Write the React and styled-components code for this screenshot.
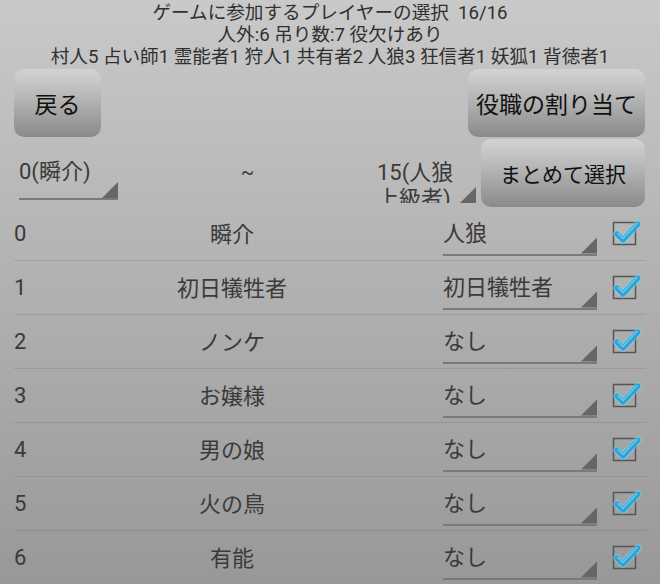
import React from 'react';
import styled, { createGlobalStyle } from 'styled-components';

const Global = createGlobalStyle`
    html, body {
        margin: 0;
        padding: 0;
    }
    body {
        font-family: Roboto, "Noto Sans CJK JP", sans-serif;
    }
`

const Screen = styled.div`
    width: 660px;
    height: 584px;
    overflow: hidden;
    background: linear-gradient(#c9c9c9, #989898);
    color: #383838;
`

const Header = styled.div`
    padding-top: 2px;
    text-align: center;
    font-size: 18.6px;
    line-height: 22px;
    color: #303030;
`

const ButtonRow = styled.div`
    display: flex;
    justify-content: space-between;
    padding: 1px 15px 0 14px;
`

const Button = styled.div`
    box-sizing: border-box;
    width: ${p => p.$w}px;
    height: 68px;
    border-radius: 10px;
    background: linear-gradient(#d3d3d3, #b4b4b4 45%, #8a8a8a);
    display: flex;
    align-items: center;
    justify-content: center;
    font-size: ${p => p.$size || 23}px;
    color: #111;
    white-space: nowrap;
`

const RangeRow = styled.div`
    display: flex;
    align-items: flex-start;
    height: 68px;
    padding: 2px 15px 0 19px;
`

const Spinner = styled.div`
    position: relative;
    box-sizing: border-box;
    width: ${p => p.$w}px;
    height: ${p => p.$h}px;
    padding-top: ${p => p.$pad}px;
    font-size: 22px;
    line-height: 26px;
    color: #3a3a3a;
    border-bottom: ${p => (p.$line ? '2px solid #7a7a7a' : 'none')};
    overflow: hidden;
    word-break: break-all;

    &::after {
        content: '';
        position: absolute;
        right: 0;
        bottom: 0;
        width: 16px;
        height: 16px;
        background: #666;
        clip-path: polygon(100% 0, 100% 100%, 0 100%);
    }
`

const SpinnerText = styled.div`
    width: ${p => p.$w || 'auto'};
`

const Tilde = styled.div`
    flex: 1;
    text-align: center;
    padding-top: 20px;
    font-size: 20px;
    line-height: 26px;
    color: #444;
`

const SideButton = styled(Button)`
    margin-left: 5px;
`

const List = styled.div`
    margin: 0 14px;
`

const Row = styled.div`
    display: flex;
    align-items: center;
    height: 53px;
    border-bottom: 1px solid rgba(0, 0, 0, 0.09);
    font-size: 22px;
    line-height: 26px;
    color: #3a3a3a;
`

const Index = styled.div`
    width: 60px;
`

const Name = styled.div`
    width: 316px;
    text-align: center;
    margin-top: 2px;
`

const RoleSpinner = styled(Spinner)`
    margin: 3px 0 0 53px;
    display: flex;
    align-items: center;
`

const CheckBox = styled.svg`
    margin: -6px 0 0 13px;
    display: block;
`

const Check = () => (
    <CheckBox width="32" height="32" viewBox="0 0 32 32">
        <rect x="3.5" y="7.5" width="22" height="22" fill="none" stroke="#555" strokeWidth="1.5" />
        <path d="M7 19 L13 25 L28 9" fill="none" stroke="#7fd4f5" strokeOpacity="0.45"
            strokeWidth="8" strokeLinecap="round" strokeLinejoin="round" />
        <path d="M7 19 L13 25 L28 9" fill="none" stroke="#29a3d8"
            strokeWidth="5" strokeLinecap="round" strokeLinejoin="round" />
        <path d="M8 18.5 L13 23.5 L27 8.5" fill="none" stroke="#6cc9ef"
            strokeWidth="1.5" strokeLinecap="round" strokeLinejoin="round" />
    </CheckBox>
)

const players = [
    ['瞬介', '人狼'],
    ['初日犠牲者', '初日犠牲者'],
    ['ノンケ', 'なし'],
    ['お嬢様', 'なし'],
    ['男の娘', 'なし'],
    ['火の鳥', 'なし'],
    ['有能', 'なし'],
];

const App = () => {
    return (
        <Screen>
            <Global />
            <Header>
                <div>ゲームに参加するプレイヤーの選択&nbsp; 16/16</div>
                <div>人外:6 吊り数:7 役欠けあり</div>
                <div>村人5 占い師1 霊能者1 狩人1 共有者2 人狼3 狂信者1 妖狐1 背徳者1</div>
            </Header>
            <ButtonRow>
                <Button $w={87}>戻る</Button>
                <Button $w={177}>役職の割り当て</Button>
            </ButtonRow>
            <RangeRow>
                <Spinner $w={99} $h={61} $pad={20} $line>
                    <SpinnerText>0(瞬介)</SpinnerText>
                </Spinner>
                <Tilde>~</Tilde>
                <Spinner $w={99} $h={64} $pad={21}>
                    <SpinnerText $w="86px">15(人狼上級者)</SpinnerText>
                </Spinner>
                <SideButton $w={164} $size={21}>まとめて選択</SideButton>
            </RangeRow>
            <List>
                {players.map(([name, role], i) => (
                    <Row key={i}>
                        <Index>{i}</Index>
                        <Name>{name}</Name>
                        <RoleSpinner $w={154} $h={41} $pad={0} $line>
                            {role}
                        </RoleSpinner>
                        <Check />
                    </Row>
                ))}
            </List>
        </Screen>
    );
}

export default App;
